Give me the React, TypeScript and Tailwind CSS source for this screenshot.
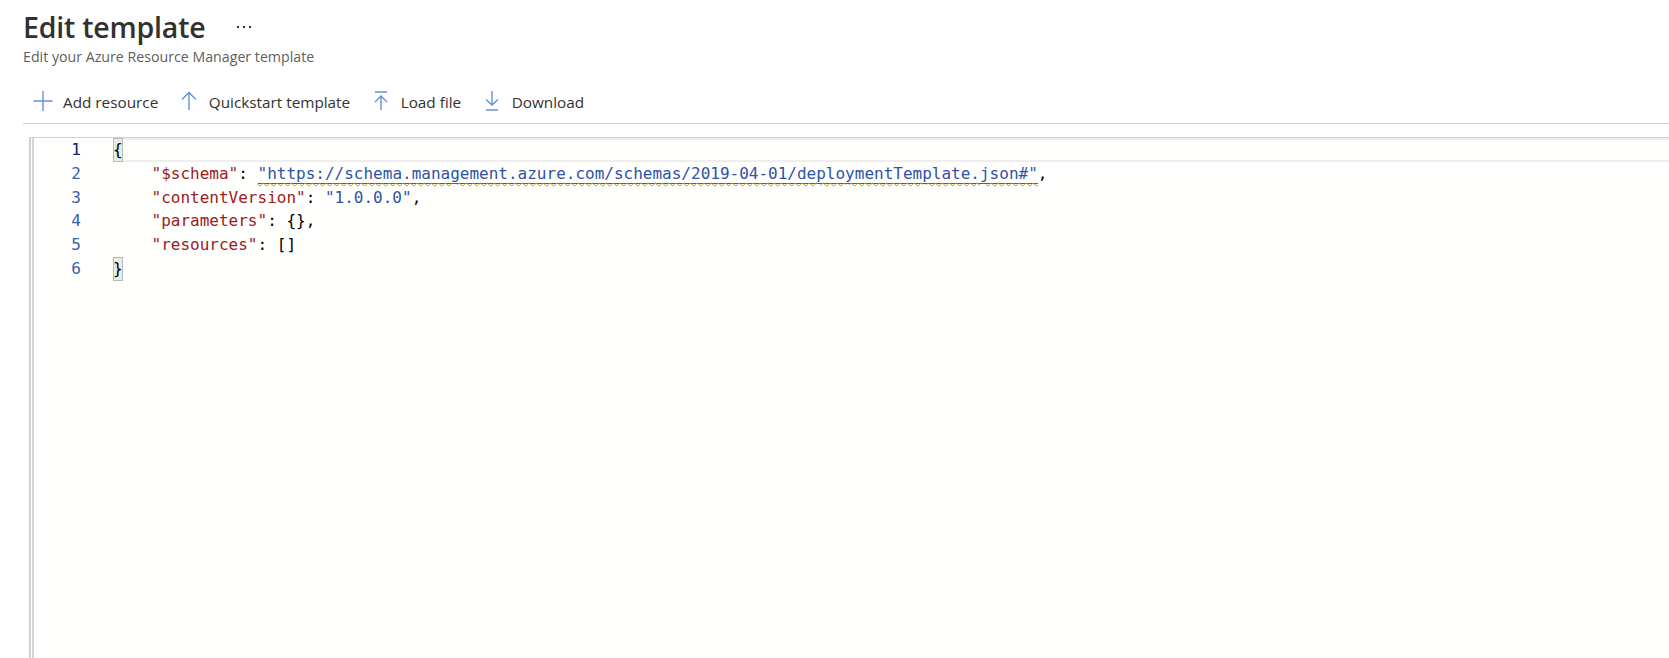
import React from "react";

const mono = "font-['DejaVu_Sans_Mono','Liberation_Mono',monospace] text-[16px]";

const ToolbarIcon: React.FC<{ d: string }> = ({ d }) => (
  <svg width="20" height="24" viewBox="0 0 20 24" fill="none" stroke="#6590dc" strokeWidth="1.4" className="shrink-0">
    <path d={d} />
  </svg>
);

const actions = [
  { label: "Add resource", d: "M0.5 11H19.5M10 1V21" },
  { label: "Quickstart template", d: "M10 20V2.5M3 9.5L10 2.5L17 9.5" },
  { label: "Load file", d: "M4 2H16M10 20V6M4 12L10 6L16 12" },
  { label: "Download", d: "M10 1V15M4 9.5L10 15L16 9.5M4 20H16" },
];

const Key: React.FC<{ children: React.ReactNode }> = ({ children }) => <span className="text-[#9c2020]">{children}</span>;
const Str: React.FC<{ children: React.ReactNode }> = ({ children }) => <span className="text-[#2f52a6]">{children}</span>;

const Matched: React.FC<{ children: React.ReactNode }> = ({ children }) => (
  <span className="inline-block h-[24px] bg-[#e6ece6] outline outline-1 -outline-offset-1 outline-[#b9b9b9]">{children}</span>
);

const lines: React.ReactNode[] = [
  <Matched key="open">{"{"}</Matched>,
  <>
    {"    "}<Key>"$schema"</Key>:{" "}
    <span className="text-[#2f52a6] underline decoration-wavy decoration-[#b89500] decoration-1 underline-offset-[3px]">
      <span className="border-b border-[#3a5fa8]">"https://schema.management.azure.com/schemas/2019-04-01/deploymentTemplate.json#"</span>
    </span>
    ,
  </>,
  <>
    {"    "}<Key>"contentVersion"</Key>: <Str>"1.0.0.0"</Str>,
  </>,
  <>
    {"    "}<Key>"parameters"</Key>: {"{}"},
  </>,
  <>
    {"    "}<Key>"resources"</Key>: []
  </>,
  <Matched key="close">{"}"}</Matched>,
];

export default function App() {
  return (
    <div className="flex h-screen flex-col overflow-hidden bg-white font-['Open_Sans','Noto_Sans',sans-serif] text-[#323130]">
      {/* Header */}
      <div className="px-[23px] pt-[7px]">
        <div className="flex items-center">
          <h1 className="text-[28.5px] leading-[40px] font-semibold tracking-[-0.2px]">Edit template</h1>
          <div className="ml-[32px] flex gap-[4px]">
            <span className="h-[2px] w-[2px] bg-[#323130]" />
            <span className="h-[2px] w-[2px] bg-[#323130]" />
            <span className="h-[2px] w-[2px] bg-[#323130]" />
          </div>
        </div>
        <p className="text-[14.2px] leading-[19px] text-[#605e5c]">Edit your Azure Resource Manager template</p>
      </div>

      {/* Toolbar */}
      <div className="mt-[24px] ml-[33px] flex h-[24px] items-center gap-[20.5px]">
        {actions.map((a) => (
          <div key={a.label} className="flex items-center gap-[10px]">
            <ToolbarIcon d={a.d} />
            <span className="text-[15.3px] whitespace-nowrap">{a.label}</span>
          </div>
        ))}
      </div>
      <div className="mt-[9px] ml-[23px] h-[1px] bg-[#cfcfcf]" />

      {/* Editor */}
      <div className="mt-[13px] ml-[29px] flex min-h-0 flex-1 border-t border-l-2 border-[#d0d0d0] bg-[#fffffe]">
        <div className="flex-1 border-l border-white">
          <div className="h-full border-l-2 border-[#d4d4d4]">
            {lines.map((line, i) => (
              <div key={i} className={`flex h-[23.8px] leading-[24px] whitespace-pre text-black ${mono}`}>
                <span className={`w-[47px] shrink-0 text-right ${i === 0 ? "text-[#0b216f]" : "text-[#3560b0]"}`}>{i + 1}</span>
                <span className={`ml-[32px] flex-1 ${i === 0 ? "relative" : ""}`}>
                  {i === 0 && <span className="absolute inset-0 border-y-2 border-[#eeeeee]" />}
                  <span className="relative">{line}</span>
                </span>
              </div>
            ))}
          </div>
        </div>
      </div>
    </div>
  );
}
